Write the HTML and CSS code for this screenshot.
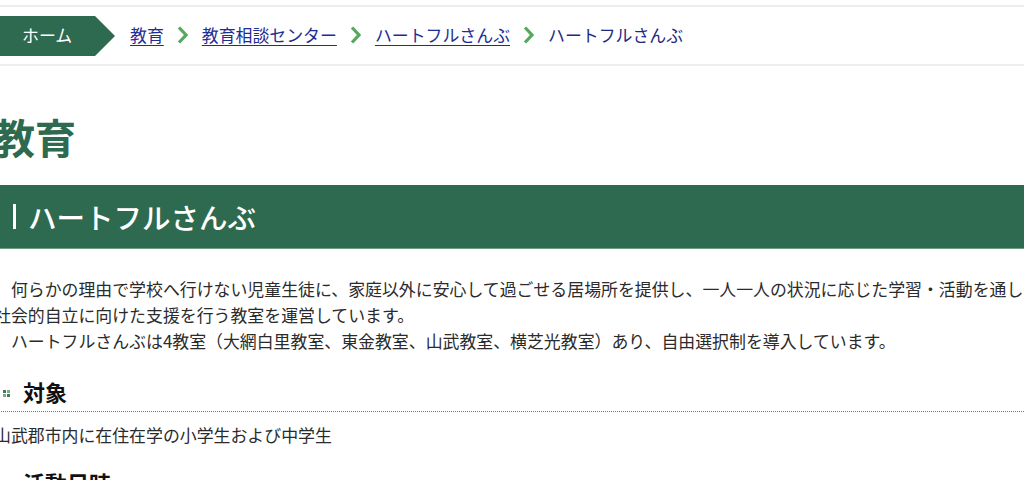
FILE: index.html
```html
<!DOCTYPE html>
<html lang="ja">
<head>
<meta charset="utf-8">
<title>ハートフルさんぶ</title>
<link rel="stylesheet" href="styles.css">
</head>
<body>
<header class="topbar">
  <nav class="crumbs">
    <a class="home" href="#">ホーム</a>
    <a class="crumb" href="#">教育</a>
    <span class="sep"><svg viewBox="0 0 11 18" width="11" height="18"><path d="M2 1.5 L9 9 L2 16.5" fill="none" stroke="#55a85c" stroke-width="3.2"/></svg></span>
    <a class="crumb" href="#">教育相談センター</a>
    <span class="sep"><svg viewBox="0 0 11 18" width="11" height="18"><path d="M2 1.5 L9 9 L2 16.5" fill="none" stroke="#55a85c" stroke-width="3.2"/></svg></span>
    <a class="crumb" href="#">ハートフルさんぶ</a>
    <span class="sep"><svg viewBox="0 0 11 18" width="11" height="18"><path d="M2 1.5 L9 9 L2 16.5" fill="none" stroke="#55a85c" stroke-width="3.2"/></svg></span>
    <span class="current">ハートフルさんぶ</span>
  </nav>
</header>
<main class="content">
  <h1 class="cat">教育</h1>
  <h2 class="band"><span class="bar"></span>ハートフルさんぶ</h2>
  <p class="para">何らかの理由で学校へ行けない児童生徒に、家庭以外に安心して過ごせる居場所を提供し、一人一人の状況に応じた学習・活動を通して社会的自立に向けた支援を行う教室を運営しています。</p>
  <p class="para">ハートフルさんぶは4教室（大網白里教室、東金教室、山武教室、横芝光教室）あり、自由選択制を導入しています。</p>
  <h3 class="sub"><span class="dots"><i></i><i></i><i></i><i></i></span>対象</h3>
  <p class="plain">山武郡市内に在住在学の小学生および中学生</p>
  <h3 class="sub"><span class="dots"><i></i><i></i><i></i><i></i></span>活動日時</h3>
</main>
</body>
</html>
```
FILE: styles.css
```css
html, body {
  margin: 0;
  padding: 0;
  background: #fff;
  overflow: hidden;
}
body {
  font-family: "Noto Sans CJK JP", "Noto Sans", sans-serif;
  font-size: 16.9px;
  color: #2b2b2b;
  width: 1024px;
  height: 480px;
}
.topbar {
  margin-top: 5px;
  border-top: 2px solid #ececec;
  border-bottom: 2px solid #eeeeee;
}
.crumbs {
  display: flex;
  align-items: center;
  height: 57px;
  padding-top: 1px;
  box-sizing: border-box;
}
.home {
  display: flex;
  align-items: center;
  height: 40px;
  width: 115px;
  box-sizing: border-box;
  padding-left: 22px;
  padding-bottom: 3px;
  background: #2d6a4f;
  color: #fff;
  text-decoration: none;
  clip-path: polygon(0 0, 95px 0, 115px 50%, 95px 100%, 0 100%);
  margin-right: 15px;
}
.crumb, .current {
  padding-bottom: 4px;
}
.crumb {
  color: #1d2d96;
  text-decoration: underline;
  text-underline-offset: 3px;
}
.current {
  color: #1d2a80;
}
.sep {
  display: flex;
  align-items: center;
  margin: 0 14px 0 13px;
  padding-bottom: 2px;
}
.content {
  margin-left: -6px;
  width: 1056px;
}
.cat {
  margin: 46px 0 24px;
  font-size: 41px;
  line-height: 49px;
  font-weight: bold;
  color: #2d6a4f;
}
.band {
  margin: 0;
  height: 63px;
  border-bottom: 1px solid #6f9a84;
  background: #2d6a4f;
  color: #fff;
  font-size: 28.5px;
  font-weight: 500;
  display: flex;
  align-items: center;
  padding-left: 19px;
}
.bar {
  display: inline-block;
  width: 3px;
  height: 25px;
  background: #fff;
  margin-right: 12px;
}
.para {
  margin: 0;
  line-height: 26px;
  text-indent: 1em;
}
.para:first-of-type {
  margin-top: 27px;
}
.sub {
  margin: 22px 0 0;
  font-size: 22px;
  line-height: 31px;
  font-weight: bold;
  color: #111;
  display: flex;
  align-items: center;
  gap: 13px;
  padding-left: 9px;
  padding-bottom: 4px;
  border-bottom: 1px dotted #777;
}
.dots {
  display: grid;
  grid-template-columns: 3px 3px;
  grid-template-rows: 3px 3px;
  gap: 1px;
  margin-top: 3px;
}
.dots i {
  background: #3f7d55;
}
.dots i:nth-child(2), .dots i:nth-child(3) {
  background: #7aa888;
}
.plain {
  margin: 10px 0 0;
  line-height: 26px;
}
.plain + .sub {
  margin-top: 19px;
}
```
